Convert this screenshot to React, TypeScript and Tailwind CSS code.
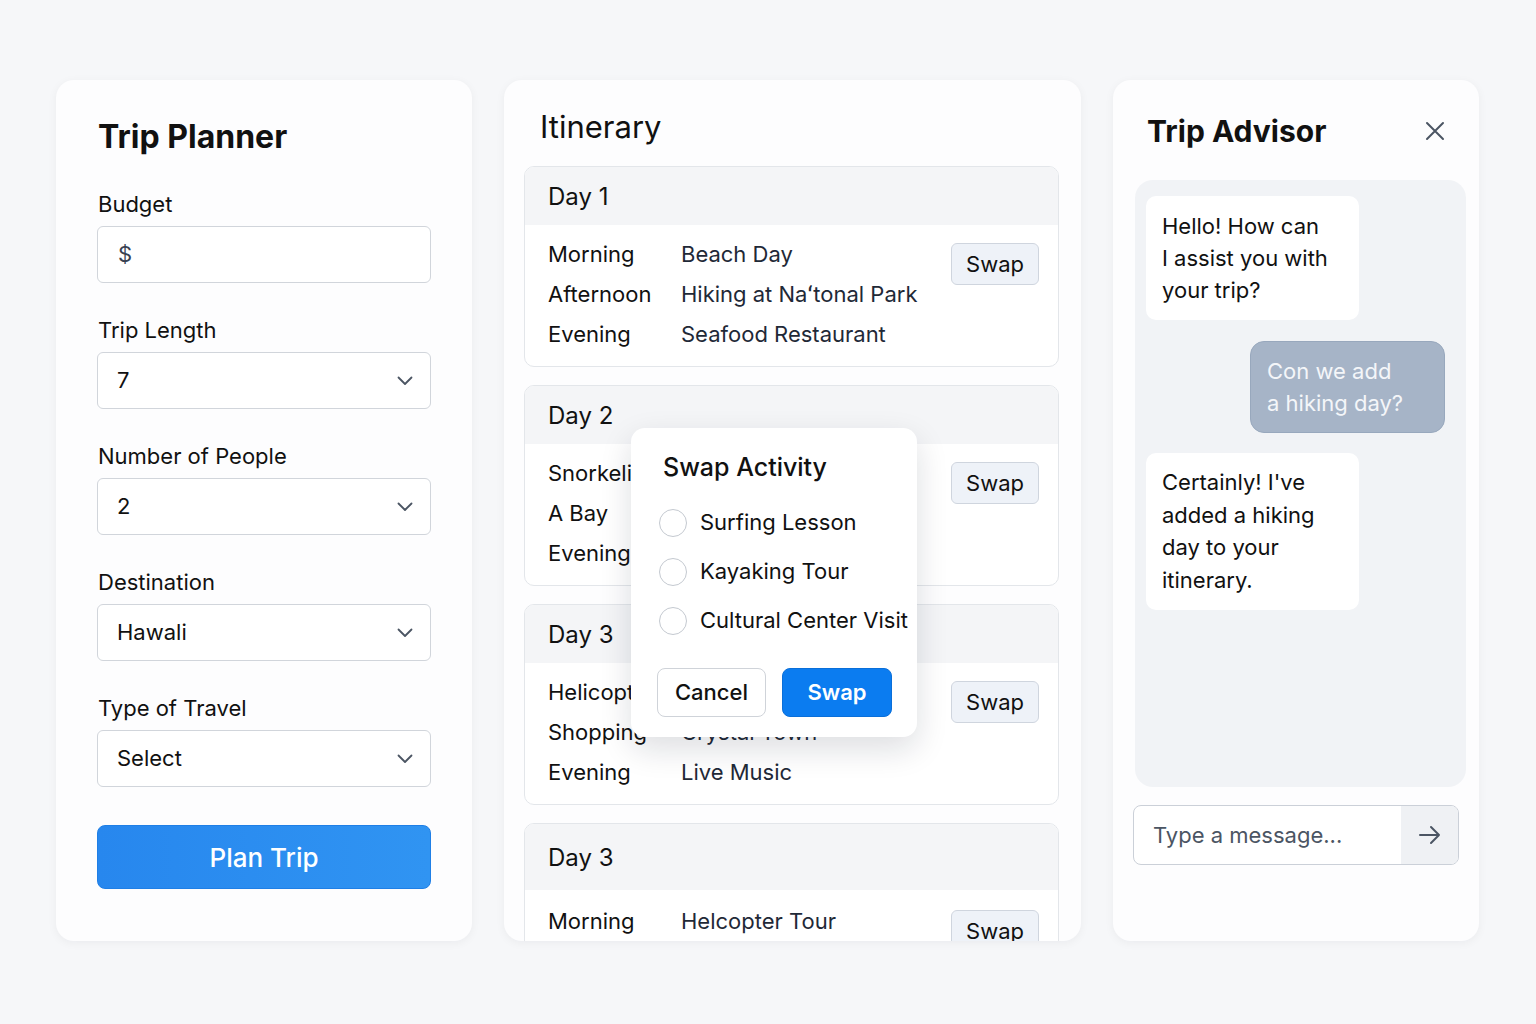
import React from 'react'

const font = { fontFamily: 'Inter, "Noto Sans", "Liberation Sans", sans-serif' }

type Slot = { label: string; activity: string }

interface DayCardProps {
  title: string
  rows: Slot[]
  headerClass?: string
  bodyClass?: string
}

function Chevron() {
  return (
    <svg width="16" height="10" viewBox="0 0 16 10" fill="none" className="shrink-0">
      <path d="M1.5 1.5 L8 8 L14.5 1.5" stroke="#4b5563" strokeWidth="1.8" strokeLinecap="round" strokeLinejoin="round" />
    </svg>
  )
}

function Field({ label, value, select = true }: { label: string; value: string; select?: boolean }) {
  return (
    <div className="flex flex-col">
      <label className="text-[22px] leading-[28px] text-[#111] mb-2 pl-[1px]">{label}</label>
      <div className="h-[57px] rounded-md border border-[#d1d5db] bg-white flex items-center justify-between pl-[19px] pr-[17px]">
        <span className={`text-[22px] ${select ? 'text-[#111]' : 'text-[#374151] pl-[1px]'}`}>{value}</span>
        {select && <Chevron />}
      </div>
    </div>
  )
}

function DayCard({ title, rows, headerClass = 'h-[58px]', bodyClass = 'pt-[9px] pb-[12px]' }: DayCardProps) {
  return (
    <div className="rounded-[10px] border border-[#e3e6ea] bg-white overflow-hidden shrink-0">
      <div className={`bg-[#f4f5f7] flex items-center px-[23px] pt-[2px] ${headerClass}`}>
        <span className="text-[24px] text-[#111]">{title}</span>
      </div>
      <div className={`flex justify-between pl-[23px] pr-[19px] ${bodyClass}`}>
        <div className="flex flex-col">
          {rows.map((r) => (
            <div key={r.label + r.activity} className="flex h-[40px] items-center text-[22px] whitespace-nowrap">
              <span className="w-[133px] text-[#111]">{r.label}</span>
              <span className="text-[#1f2937]">{r.activity}</span>
            </div>
          ))}
        </div>
        <button className="mt-[9px] h-[42px] w-[88px] rounded-md border border-[#cfd5de] bg-[#eef2f8] text-[22px] text-[#111]">
          Swap
        </button>
      </div>
    </div>
  )
}

function SwapModal() {
  const options = ['Surfing Lesson', 'Kayaking Tour', 'Cultural Center Visit']
  return (
    <div className="absolute left-[127px] top-[348px] w-[286px] rounded-[14px] bg-white shadow-[0_12px_32px_rgba(15,23,42,0.14)] pt-[22px] pb-[20px] pl-[26px] pr-[12px] z-10">
      <h3 className="pl-[6px] text-[25px] leading-[34px] font-medium text-[#111]">Swap Activity</h3>
      <div className="mt-[24px] pl-[2px] flex flex-col gap-[20px]">
        {options.map((o) => (
          <label key={o} className="flex items-center gap-[13px] h-[29px]">
            <span className="w-[28px] h-[28px] rounded-full border-[1.5px] border-[#c4c9d0] bg-white shrink-0" />
            <span className="text-[22px] text-[#111] whitespace-nowrap">{o}</span>
          </label>
        ))}
      </div>
      <div className="mt-[33px] flex gap-[16px]">
        <button className="h-[49px] w-[109px] rounded-lg border border-[#cfd3d9] bg-white text-[22px] font-medium text-[#111]">
          Cancel
        </button>
        <button className="h-[49px] w-[110px] rounded-lg bg-[#0b7cf0] border border-[#0a6fd9] text-[22px] font-semibold text-white">
          Swap
        </button>
      </div>
    </div>
  )
}

export default function App() {
  return (
    <div style={font} className="w-[1536px] h-[1024px] bg-[#f6f7f9] flex gap-8 pl-[56px] pt-[80px]">
      {/* Trip planner form */}
      <div className="w-[416px] h-[861px] rounded-[18px] bg-[#fdfdfe] shadow-[0_2px_10px_rgba(15,23,42,0.05)] px-[41px] pt-[37px]">
        <h1 className="text-[32px] leading-[40px] font-bold text-[#111] pl-[1px]">Trip Planner</h1>
        <div className="mt-[33px] flex flex-col gap-[33px]">
          <Field label="Budget" value="$" select={false} />
          <Field label="Trip Length" value="7" />
          <Field label="Number of People" value="2" />
          <Field label="Destination" value="Hawali" />
          <Field label="Type of Travel" value="Select" />
        </div>
        <button className="mt-[38px] w-full h-[64px] rounded-lg bg-gradient-to-r from-[#2787ee] to-[#3094f2] border border-[#1f7fe6] text-[26px] font-medium text-white">
          Plan Trip
        </button>
      </div>

      {/* Itinerary */}
      <div className="relative w-[577px] h-[861px] rounded-[18px] bg-[#fdfdfe] shadow-[0_2px_10px_rgba(15,23,42,0.05)] overflow-hidden pt-[27px] pl-[20px] pr-[22px]">
        <h2 className="pl-[16px] text-[31px] leading-[40px] text-[#111]">Itinerary</h2>
        <div className="mt-[19px] flex flex-col gap-[18px]">
          <DayCard
            title="Day 1"
            rows={[
              { label: 'Morning', activity: 'Beach Day' },
              { label: 'Afternoon', activity: 'Hiking at Na\u02bbtonal Park' },
              { label: 'Evening', activity: 'Seafood Restaurant' },
            ]}
          />
          <DayCard
            title="Day 2"
            rows={[
              { label: 'Snorkeling', activity: 'at Hanauma' },
              { label: 'A Bay', activity: 'Luau Dinner' },
              { label: 'Evening', activity: 'Sunset Cruise' },
            ]}
          />
          <DayCard
            title="Day 3"
            rows={[
              { label: 'Helicopter', activity: 'Island Tour' },
              { label: 'Shopping', activity: 'Crystal Town' },
              { label: 'Evening', activity: 'Live Music' },
            ]}
          />
          <DayCard
            title="Day 3"
            headerClass="h-[66px]"
            bodyClass="pt-[11px] pb-[12px]"
            rows={[
              { label: 'Morning', activity: 'Helcopter Tour' },
              { label: 'Afternoon', activity: 'Waterfall Hike' },
              { label: 'Evening', activity: 'Night Market' },
            ]}
          />
        </div>
        <SwapModal />
      </div>

      {/* Chat advisor */}
      <div className="w-[366px] h-[861px] rounded-[18px] bg-[#fdfdfe] shadow-[0_2px_10px_rgba(15,23,42,0.05)] pt-[31px] pl-[20px] pr-[13px] flex flex-col">
        <div className="flex items-center justify-between pl-[14px] pr-[21px] h-[40px]">
          <h2 className="text-[30px] font-bold text-[#111]">Trip Advisor</h2>
          <svg width="20" height="20" viewBox="0 0 20 20" fill="none">
            <path d="M2 2 L18 18 M18 2 L2 18" stroke="#4b5563" strokeWidth="2" strokeLinecap="round" />
          </svg>
        </div>
        <div className="ml-[2px] mt-[29px] h-[607px] rounded-[18px] bg-[#f1f3f6] pt-[16px] pl-[11px] pr-[21px] flex flex-col">
          <div className="w-[213px] rounded-[10px] bg-white pl-[16px] pt-[14px] pb-[14px] text-[22px] leading-[32px] text-[#111]">
            Hello! How can
            <br />I assist you with
            <br />
            your trip?
          </div>
          <div className="self-end mt-[21px] w-[195px] rounded-[14px] bg-[#a6b4c7] border border-[#98a8bd] pl-[16px] pt-[13px] pb-[13px] text-[22px] leading-[32px] text-[#f4f6f9]">
            Con we add
            <br />a hiking day?
          </div>
          <div className="mt-[20px] w-[213px] rounded-[10px] bg-white pl-[16px] pt-[13px] pb-[14px] text-[22px] leading-[32.5px] text-[#111]">
            Certainly! I've
            <br />
            added a hiking
            <br />
            day to your
            <br />
            itinerary.
          </div>
        </div>
        <div className="mt-[18px] w-[326px] h-[60px] rounded-lg border border-[#cbd0d8] bg-white flex overflow-hidden">
          <div className="flex-1 flex items-center pl-[19px] text-[22px] text-[#4b5563]">Type a message...</div>
          <div className="w-[57px] bg-[#eff1f4] flex items-center justify-center">
            <svg width="24" height="22" viewBox="0 0 24 22" fill="none">
              <path d="M2 11 H21 M13 3 L21 11 L13 19" stroke="#4b5563" strokeWidth="2" strokeLinecap="round" strokeLinejoin="round" />
            </svg>
          </div>
        </div>
      </div>
    </div>
  )
}
